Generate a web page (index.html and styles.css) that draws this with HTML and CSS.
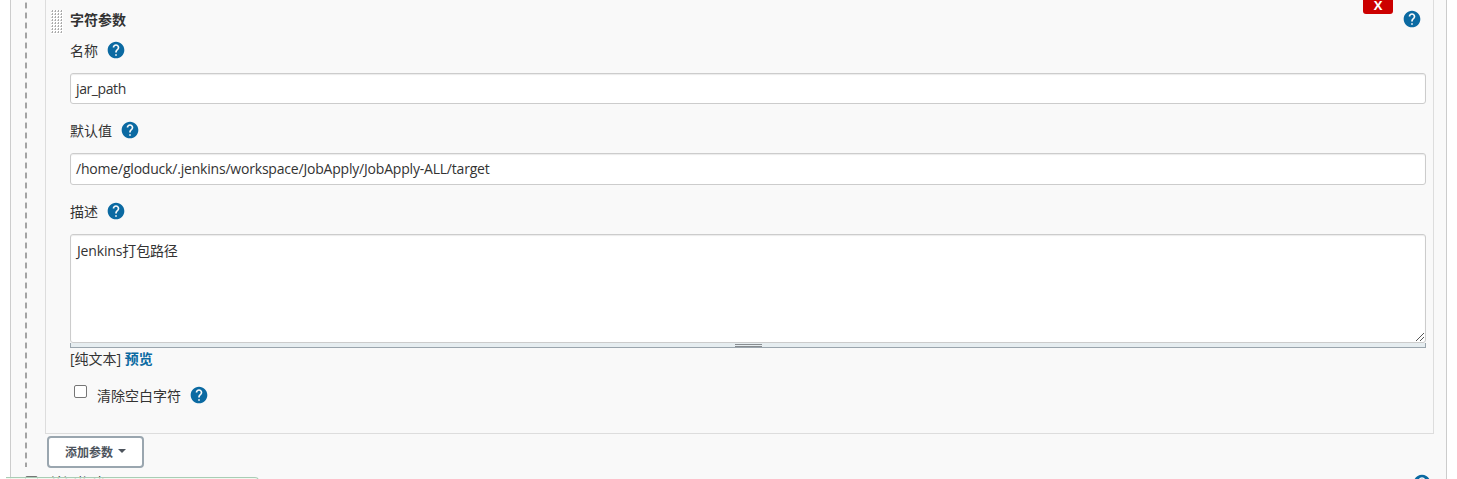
FILE: index.html
```html
<!DOCTYPE html>
<html lang="zh-CN">
<head>
<meta charset="utf-8">
<title>Jenkins</title>
<link rel="stylesheet" href="styles.css">
</head>
<body>
<svg class="defs" aria-hidden="true">
  <defs>
    <symbol id="help" viewBox="0 0 24 24"><path d="M12 2C6.48 2 2 6.48 2 12s4.48 10 10 10 10-4.48 10-10S17.52 2 12 2zm1 17h-2v-2h2v2zm2.07-7.75l-.9.92C13.45 12.9 13 13.5 13 15h-2v-.5c0-1.1.45-2.1 1.17-2.83l1.24-1.26c.37-.36.59-.86.59-1.41 0-1.1-.9-2-2-2s-2 .9-2 2H8c0-2.21 1.79-4 4-4s4 1.79 4 4c0 .88-.36 1.68-.93 2.25z"/></symbol>
    <pattern id="dots" width="3" height="3" patternUnits="userSpaceOnUse"><path class="dot-light" d="M0 0h3v3H0z"/><path class="dot-mid" d="M0 1h2v1H0z"/><path class="dot-dark" d="M1 0h1v2H1z"/></pattern>
    <pattern id="dash" width="2" height="10" patternUnits="userSpaceOnUse"><path class="dash-end" d="M0 2h2v7H0z"/><path class="dash-fill" d="M0 3h2v5H0z"/></pattern>
  </defs>
</svg>
<main class="panel">
  <div class="section">
    <svg class="rail"><rect width="2" height="467" fill="url(#dash)"/></svg>
    <div class="body">
      <section class="param">
        <svg class="grip"><rect width="12" height="24" fill="url(#dots)"/></svg>
        <div class="form">
          <header class="title">
            <h2>字符参数</h2>
            <div class="tools"><button class="remove">X</button><svg class="help"><use href="#help"/></svg></div>
          </header>
          <div class="label"><span>名称</span><svg class="help"><use href="#help"/></svg></div>
          <div class="input name"><span>jar_path</span></div>
          <div class="label second"><span>默认值</span><svg class="help"><use href="#help"/></svg></div>
          <div class="input value"><span>/home/gloduck/.jenkins/workspace/JobApply/JobApply-ALL/target</span></div>
          <div class="label third"><span>描述</span><svg class="help"><use href="#help"/></svg></div>
          <div class="textarea"><span>Jenkins打包路径</span><svg class="resize" viewBox="0 0 10 10"><path d="M1 9L9 1M5 9L9 5"/></svg></div>
          <div class="handle"><i></i></div>
          <div class="preview"><span>[纯文本]</span> <a>预览</a></div>
          <div class="check"><i class="box"></i><span>清除空白字符</span><svg class="help"><use href="#help"/></svg></div>
        </div>
      </section>
      <button class="add">添加参数<i class="caret"></i></button>
    </div>
  </div>
  <div class="next"><i class="box"></i><span>关闭构建</span><svg class="help"><use href="#help"/></svg></div>
</main>
<div class="status"></div>
</body>
</html>
```
FILE: styles.css
```css
* { box-sizing: border-box; }
body {
  margin: 0;
  height: 479px;
  overflow: hidden;
  position: relative;
  background: #fff;
  color: #333;
  font: 14px/20px "Open Sans", "Noto Sans CJK SC", sans-serif;
}
svg { display: block; flex: none; }
i { display: block; flex: none; }
.defs { position: absolute; width: 0; height: 0; }
.dot-light { fill: #fff; }
.dot-mid { fill: #d0d0d0; }
.dot-dark { fill: #aaa; }
.dash-fill { fill: #a3a3a3; }
.dash-end { fill: #d4d4d4; }
.panel {
  margin: 0 10px;
  height: 479px;
  overflow: hidden;
  background: #f9f9f9;
  border: solid #ccc;
  border-width: 0 1px;
}
.section { display: flex; height: 467px; padding-left: 14px; }
.rail { width: 2px; height: 467px; }
.body { margin-left: 18px; }
.param {
  display: flex;
  width: 1389px;
  height: 434px;
  border: 1px solid #ddd;
  border-top: 0;
}
.grip { width: 12px; height: 24px; margin: 10px 0 0 5px; }
.form { width: 1356px; margin-left: 7px; }
.title { display: flex; justify-content: space-between; height: 40px; }
h2 { margin: 10px 0 0; font-size: 14px; line-height: 20px; font-weight: 700; }
.tools { display: flex; margin-right: 4px; gap: 9px; }
.remove {
  width: 30px;
  height: 14px;
  padding: 0 0 3px;
  border: 0;
  border-radius: 0 0 3px 3px;
  background: #c00;
  color: #fff;
  font: 700 13px/11px "Open Sans", sans-serif;
}
.tools .help { margin-top: 9px; }
.help { width: 20px; height: 20px; fill: #0b6aa2; }
.label { display: flex; gap: 8px; height: 33px; }
.label span { height: 20px; line-height: 22px; }
.second { margin-top: 16px; }
.third { margin-top: 16px; }
.input {
  height: 31px;
  padding: 5px;
  background: #fff;
  border: 1px solid #ccc;
  border-radius: 3px;
  box-shadow: inset 0 1px 1px rgba(0, 0, 0, .08);
}
.value { height: 32px; }
.input span { display: block; }
.name span { letter-spacing: -.4px; }
.value span { letter-spacing: -.2px; }
.textarea {
  position: relative;
  height: 109px;
  padding: 6px;
  background: #fff;
  border: 1px solid #ccc;
  border-radius: 3px;
  box-shadow: inset 0 1px 1px rgba(0, 0, 0, .08);
  letter-spacing: -.15px;
}
.resize {
  position: absolute;
  right: 0;
  bottom: 0;
  width: 10px;
  height: 10px;
  fill: none;
  stroke: #555;
}
.handle {
  display: flex;
  justify-content: center;
  height: 5px;
  background: #e6edf0;
  border: 1px solid #9aa5ad;
  border-top: 0;
}
.handle i { width: 27px; height: 3px; margin-top: 1px; border: solid #888c90; border-width: 1px 0; }
.preview { height: 37px; padding-top: 1px; line-height: 20px; white-space: nowrap; }
.preview a { color: #0b6aa2; font-weight: 700; }
.check { display: flex; padding-left: 4px; }
.box {
  width: 13px;
  height: 13px;
  background: #fff;
  border: 1px solid #767676;
  border-radius: 2px;
}
.check span { margin: 1px 8px 0 10px; }
.add {
  display: flex;
  align-items: center;
  justify-content: center;
  gap: 5px;
  width: 97px;
  height: 32px;
  margin: 2px 0 0 2px;
  padding: 2px 0 0;
  background: #fff;
  border: 2px solid #9aa6af;
  border-radius: 4px;
  color: #4d545d;
  font: 700 12px/20px "Open Sans", "Noto Sans CJK SC", sans-serif;
}
.caret { margin-top: -5px; border: 4px solid transparent; border-top-color: #4d545d; border-bottom: 0; }
.next { display: flex; height: 20px; padding: 6px 14px 0; line-height: 20px; }
.next .box { margin-top: 3px; }
.next span { margin-left: 11px; }
.next .help { margin-left: auto; }
.status {
  position: absolute;
  left: 6px;
  top: 477px;
  width: 253px;
  height: 20px;
  background: rgba(243, 247, 239, .8);
  border: 1px solid #a9cdb5;
  border-left: 0;
  border-radius: 0 4px 0 0;
}
```
